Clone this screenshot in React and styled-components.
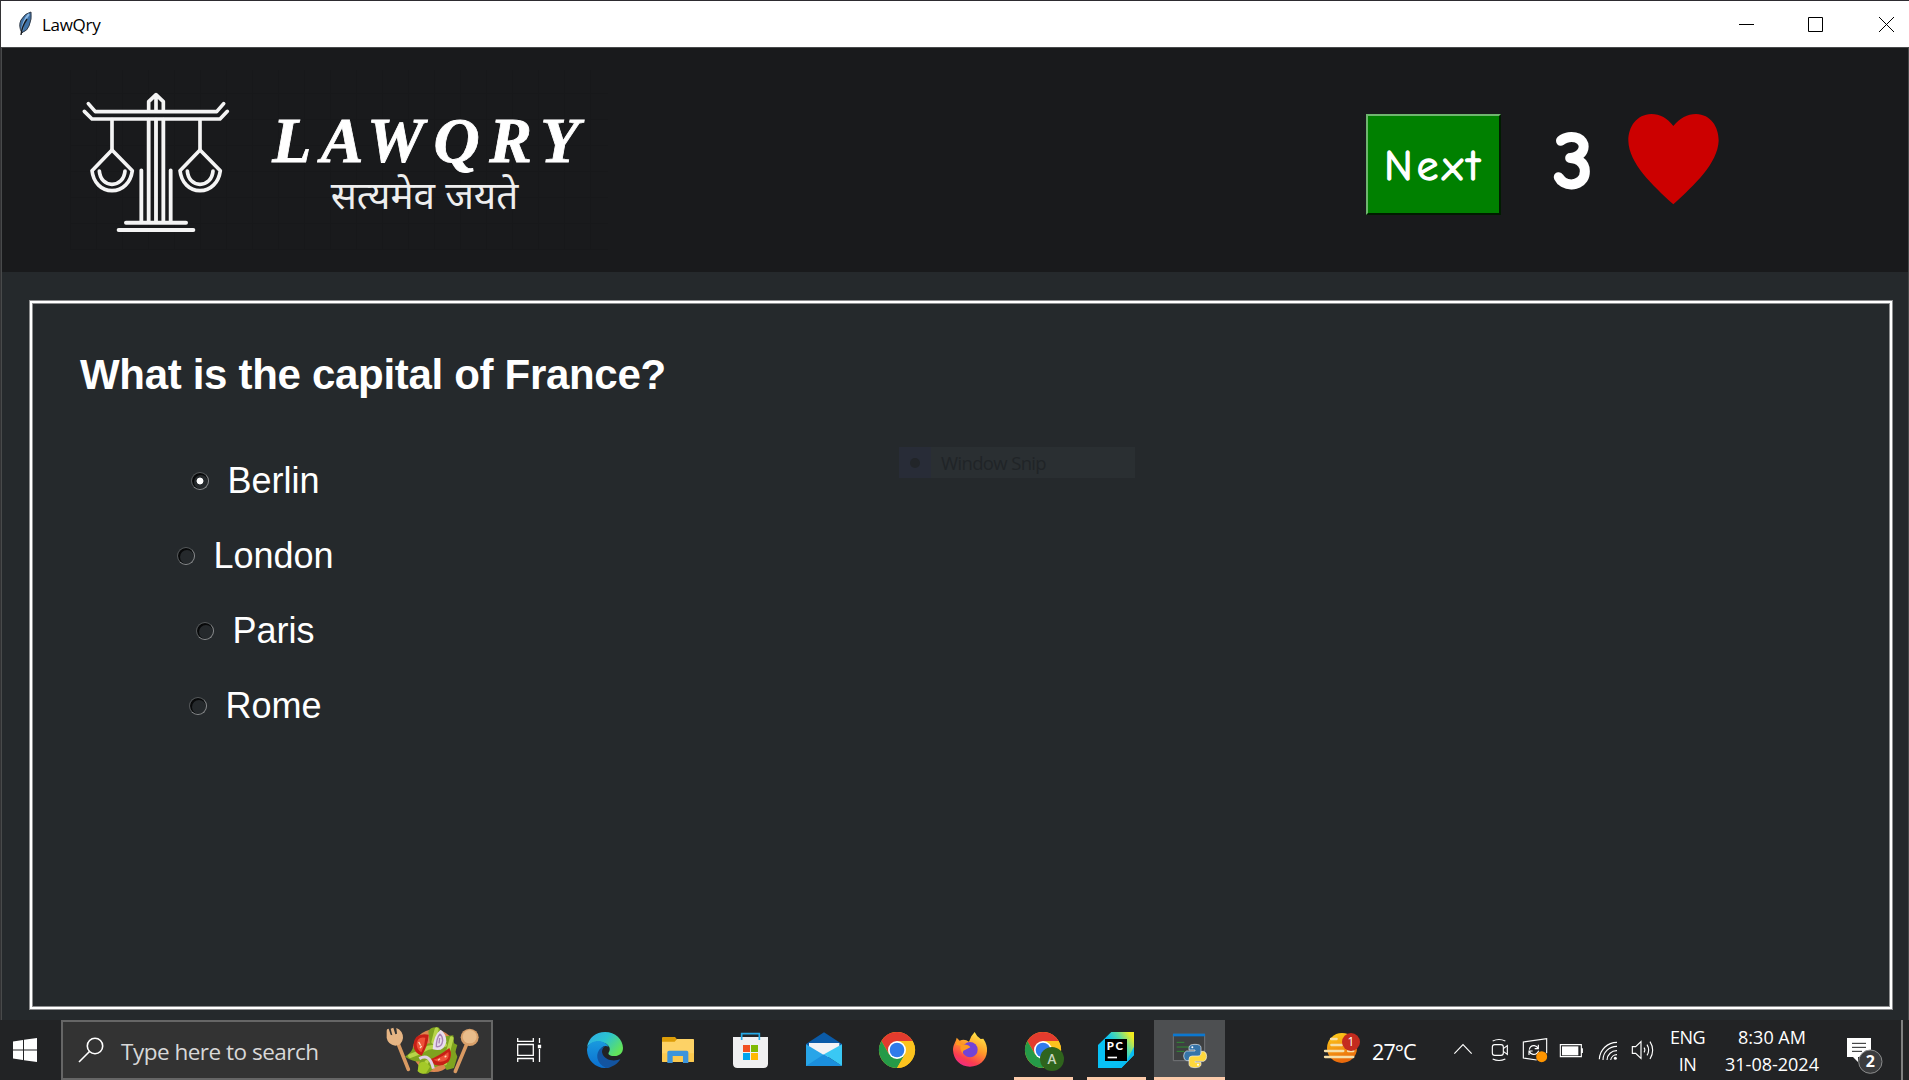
import React, { useState } from "react";
import styled, { createGlobalStyle, css } from "styled-components";

const GlobalStyle = createGlobalStyle`
  * { box-sizing: border-box; }
  html, body { margin: 0; padding: 0; background: #222325; overflow: hidden; }
  svg { display: block; flex: none; }
`;

const ui = `"Segoe UI", "Open Sans", "Noto Sans", sans-serif`;
const comic = `"Comic Sans MS", "Comic Neue", Lato, sans-serif`;

const Desktop = styled.div`
  width: 1909px;
  height: 1080px;
  display: flex;
  flex-direction: column;
  font-family: ${ui};
`;

const Window = styled.main`
  position: relative;
  height: 1020px;
  display: flex;
  flex-direction: column;
  background: #25292c;
  border-top: 1px solid #2d2b30;
  border-left: 1px solid #333335;
`;

const TitleBar = styled.header`
  height: 46px;
  flex: none;
  display: flex;
  align-items: center;
  background: #fff;
  padding-left: 16px;
`;

const WindowTitle = styled.span`
  margin-left: 9px;
  flex: 1;
  font-size: 17px;
  letter-spacing: -0.3px;
  line-height: 24px;
  padding-top: 2px;
  color: #000;
`;

const WindowButton = styled.button`
  width: 70px;
  height: 46px;
  padding: 0;
  border: 0;
  background: none;
  display: flex;
  align-items: center;
  justify-content: center;
`;

const WindowButtons = styled.div`
  display: flex;
  margin-right: -12px;
`;

const Client = styled.div`
  flex: 1;
  display: flex;
  flex-direction: column;
  border: solid #484a4b;
  border-width: 1px 1px 0 1px;
`;

const Banner = styled.section`
  height: 224px;
  flex: none;
  display: flex;
  align-items: flex-start;
  background: #191a1c;
`;

const Logo = styled.div`
  width: 538px;
  height: 180px;
  margin: 22px 0 0 68px;
  display: flex;
  background:
    repeating-linear-gradient(90deg, #17181a 0 1px, transparent 1px 26px),
    repeating-linear-gradient(0deg, #17181a 0 1px, transparent 1px 26px);
`;

const LogoWords = styled.div`
  width: 330px;
  margin: 39px 0 0 9px;
  display: flex;
  flex-direction: column;
  align-items: center;
  color: #fff;
`;

const LogoName = styled.div`
  font: italic bold 64px/64px "Liberation Serif", serif;
  letter-spacing: 9.5px;
  margin-right: -9px;
  white-space: nowrap;
  -webkit-text-stroke: 0.8px #fff;
`;

const LogoMotto = styled.div`
  margin: 5px 3px 0 0;
  font: 38.7px/44px "Noto Sans Devanagari", "Noto Sans", sans-serif;
  color: #eee;
  white-space: nowrap;
`;

const NextButton = styled.button`
  width: 135px;
  height: 101px;
  margin: 66px 0 0 758px;
  padding: 4px 0 0 1px;
  background: #008000;
  border: 2px solid;
  border-color: #6fb56f #001c00 #001c00 #6fb56f;
  color: #fff;
  font: 43px/1 ${comic};
  letter-spacing: 4.2px;
  -webkit-text-stroke: 1.3px #fff;
`;

const Lives = styled.div`
  display: flex;
  margin: 66px 0 0 48px;
`;

const LivesCount = styled.span`
  width: 48px;
  height: 94px;
  text-align: center;
  font: bold 82px/95px ${comic};
  -webkit-text-stroke: 2px #fff;
  color: #fff;
`;

const Heart = styled.svg`
  margin-left: 31px;
`;

const QuizPanel = styled.section`
  flex: 1;
  margin: 29px 16px 11px 28px;
  border: 2px solid #fff;
  box-shadow: 0 0 0 1px #8c8d8f, inset 0 0 0 1px #8c8d8f;
  padding: 45px 0 0 48px;
  color: #fff;
  font-family: "Liberation Sans", Arial, sans-serif;
`;

const Question = styled.h1`
  margin: 0;
  font-size: 42px;
  line-height: 54px;
  font-weight: bold;
  letter-spacing: -0.31px;
  white-space: nowrap;
`;

const Options = styled.div`
  width: 351px;
  margin-top: 41px;
  display: flex;
  flex-direction: column;
  align-items: center;
`;

const Option = styled.label`
  height: 75px;
  display: flex;
  align-items: center;
  font-size: 36px;
`;

const Radio = styled.input`
  appearance: none;
  width: 18px;
  height: 18px;
  margin: 0 18px 0 0;
  border-radius: 50%;
  border: 1.5px solid;
  border-color: #55585a #8a8c8e #8a8c8e #55585a;
  box-shadow: inset 1px 1px 0 1px #08090a;
  background: #25292c;
  &:checked {
    background: radial-gradient(circle, #fff 0 3px, #25292c 3.8px);
  }
`;

const SnipHint = styled.div`
  position: absolute;
  left: 898px;
  top: 446px;
  width: 236px;
  height: 31px;
  display: flex;
  align-items: center;
  background: #2a2f32;
  color: #202427;
  font-size: 18.5px;
  letter-spacing: -0.65px;
`;

const SnipMark = styled.span`
  width: 32px;
  height: 31px;
  margin-right: 10px;
  display: flex;
  align-items: center;
  justify-content: center;
  background: #282c37;
  &::after {
    content: "";
    width: 10px;
    height: 10px;
    border-radius: 50%;
    background: #222529;
  }
`;

const Taskbar = styled.footer`
  height: 60px;
  display: flex;
  align-items: center;
  background: #222325;
  color: #fff;
`;

const StartButton = styled.div`
  width: 61px;
  padding-left: 13px;
`;

const SearchBox = styled.div`
  width: 432px;
  height: 60px;
  display: flex;
  align-items: center;
  background: #333;
  border: 2px solid #666;
  padding-left: 15px;
`;

const SearchText = styled.span`
  width: 240px;
  margin-left: 17px;
  margin-right: 21px;
  padding-top: 3px;
  font-size: 22.5px;
  letter-spacing: -0.5px;
  color: #d8d8d8;
  white-space: nowrap;
`;

const TaskView = styled.div`
  width: 76px;
  padding-left: 24px;
`;

const AppCell = styled.div`
  width: 73px;
  height: 60px;
  padding: 12px 0 0 18px;
  ${(p) =>
    p.$running &&
    css`
      background: linear-gradient(#fccbab, #fccbab) 7px 57px / 59px 3px no-repeat;
    `}
  ${(p) =>
    p.$active &&
    css`
      background:
        linear-gradient(#fccbab, #fccbab) 1px 57px / 71px 3px no-repeat,
        linear-gradient(#4d4f51, #4d4f51) 1px 0 / 71px 60px no-repeat;
    `}
`;

const Weather = styled.div`
  display: flex;
  align-items: center;
  width: 132px;
  margin-left: 94px;
  font-size: 21.5px;
  letter-spacing: -0.9px;
`;

const Temperature = styled.span`
  margin-left: 8px;
  padding-top: 3px;
`;

const TrayIcon = styled.svg`
  margin-left: ${(p) => p.$gap}px;
  fill: none;
  stroke: #fff;
  stroke-width: 3.4;
`;

const TrayText = styled.div`
  width: ${(p) => p.$width}px;
  margin-left: ${(p) => p.$gap}px;
  display: flex;
  flex-direction: column;
  align-items: center;
  font-size: 18px;
  line-height: 27px;
  letter-spacing: ${(p) => p.$tracking}px;
  white-space: nowrap;
  padding-top: 1px;
`;

const ShowDesktop = styled.div`
  width: 2px;
  height: 60px;
  margin-left: 17px;
  background: #808080;
`;

/* Icons share one enlarged drawing grid: three units to a pixel. */
const AppIcon = ({ x, children }) => (
  <svg width="36" height="40" viewBox={`${x} 96 108 120`} overflow="visible">
    {children}
  </svg>
);

const Feather = () => (
  <svg width="16" height="26" viewBox="0 0 16 26">
    <path d="M5 22 Q1 15 4 9 Q8 2 14 1 Q15 8 12 15 Q10 20 6 21Z" fill="#3f73a8" stroke="#333b46" strokeWidth="1" />
    <path d="M12 3 Q6 10 5 20" stroke="#8db9e4" strokeWidth="2" fill="none" />
    <path d="M10 8 Q5 15 4 24" stroke="#16191d" strokeWidth="1.4" fill="none" />
  </svg>
);

const ScalesDrawing = styled.svg`
  margin-top: 10px;
`;

const Scales = () => (
  <ScalesDrawing width="182" height="160" viewBox="0 0 546 480">
    <g fill="none" stroke="#f4f4f4" strokeWidth="11" strokeLinecap="round" strokeLinejoin="round">
      <path d="M55 71 76 95H440L461 71M43 94 66 117H450L472 94" />
      <path d="M236 92V65L258 44 280 65V92M258 46V92" />
      <path d="M236 119V425M258 119V425M280 119V425M214 271V425M302 271V425" strokeWidth="11.5" />
      <path d="M168 428H348M146 450H370" strokeWidth="12" />
      <path d="M126 119V210M390 119V210" />
      <path d="M126 210 66 272C70 308 94 332 126 332S182 308 187 272ZM390 210 330 272C334 308 358 332 390 332S446 308 451 272Z" />
      <path d="M88 273C90 298 106 313 126 313S163 298 165 273M352 273C354 298 370 313 390 313S427 298 429 273" />
    </g>
  </ScalesDrawing>
);

const Chrome = ({ cx }) => (
  <g transform={`translate(${cx} 150)`}>
    <circle r="54" fill="#fbc116" />
    <path d="M-46.800 -27A54 54 0 0 1 46.800 -27L0 -27 -23 13.500Z" fill="#e33b2e" />
    <path d="M-46.800 -27A54 54 0 0 0 0 54L23.400 13.500 -23.400 13.500Z" fill="#259a48" />
    <path d="M0-27H46.800A54 54 0 0 1 0 54L23.400 13.500Z" fill="#fcc31e" />
    <circle r="27" fill="#fff" />
    <circle r="22" fill="#2f7bea" />
  </g>
);

const Salad = () => (
  <svg width="100" height="56" viewBox="36 6 300 168">
    <g strokeLinecap="round" fill="none">
      <path d="M84 70 115 148" stroke="#d99a62" strokeWidth="11" />
      <path d="M291 70 256 154" stroke="#d99a62" strokeWidth="11" />
    </g>
    <path d="M50 36Q49 26 56 26L62 44 67 46 62 26 70 23 76 43 81 41 79 24Q99 32 99 54 96 76 76 77 54 74 50 54Z" fill="#e6b584" />
    <ellipse cx="299" cy="52" rx="27" ry="26" fill="#d8a06a" />
    <ellipse cx="299" cy="50" rx="21" ry="20" fill="#e9bd8b" />
    <circle cx="192" cy="92" r="64" fill="#dc8650" />
    <path d="M105 110Q125 99 133 76L180 70 175 35Q181 19 205 22 216 32 213 50L250 46 252 70 262 75 256 95 262 110 252 144 230 150 221 132 195 142 175 160Q160 165 143 154L149 124Q130 126 105 110Z" fill="#7fa31f" />
    <path d="M120 108Q145 100 174 83L225 75M200 28 190 66M155 150 170 126M245 55 225 130" stroke="#b7d448" strokeWidth="12" fill="none" strokeLinecap="round" />
    <path d="M176 44Q133 36 130 75 132 99 155 107 174 77 176 44Z" fill="#c71f16" />
    <path d="M166 53Q140 48 140 75 142 91 154 97 165 76 166 53Z" fill="#ee5138" />
    <path d="M212 29Q190 45 188 88 222 98 229 65 229 41 212 29Z" fill="#e9dcec" />
    <path d="M210 42Q199 55 199 80 216 82 218 62 218 49 210 42M209 54 207 70" fill="none" stroke="#a783b4" strokeWidth="4" />
    <path d="M180 118Q204 110 238 84 249 106 235 126 216 141 194 134 183 128 180 118Z" fill="#c71f16" />
    <path d="M190 119Q214 113 235 96 239 111 229 120 211 131 190 119Z" fill="#ee5138" />
    <path d="M146 66 152 76M150 84 155 78M204 121 210 116M224 112 229 107" stroke="#ffd9b8" strokeWidth="4" />
    <path d="M148 116Q180 98 190 146" fill="none" stroke="#e0cfe6" strokeWidth="9" />
    <path d="M146 132Q163 116 180 140L168 160Q150 164 143 153Z" fill="#a4c928" />
  </svg>
);

const apps = [
  {
    name: "edge",
    icon: (
      <AppIcon x={81}>
        <defs>
          <linearGradient id="edgeTop" x1="0" x2="1" y1="0" y2=".6">
            <stop offset="0" stopColor="#2fa9e8" />
            <stop offset=".5" stopColor="#2bc3d2" />
            <stop offset="1" stopColor="#62e35a" />
          </linearGradient>
          <linearGradient id="edgeSide" x2="0" y2="1">
            <stop offset="0" stopColor="#1a9ade" />
            <stop offset="1" stopColor="#0b6fd0" />
          </linearGradient>
        </defs>
        <path d="M81 142C86 112 108 96 135 96 166 96 189 119 189 144 189 160 177 169 161 168 149 168 142 162 147 156 153 147 147 135 136 130 116 120 92 126 81 142Z" fill="url(#edgeTop)" />
        <path d="M81 150C82 132 99 121 117 123 131 124 142 132 146 140 130 133 119 145 120 160 121 182 137 195 152 201 117 213 82 187 81 150Z" fill="url(#edgeSide)" />
        <path d="M124 143C104 158 108 190 138 204 158 202 174 191 181 178 160 186 132 180 127 160 124 150 130 141 136 137Z" fill="#1354a0" />
      </AppIcon>
    ),
  },
  {
    name: "explorer",
    icon: (
      <AppIcon x={300}>
        <path d="M306 113Q306 111 309 111H345L351 118V130H306Z" fill="#dd9d08" />
        <path d="M306 125H344L351 117H400Q402 117 402 120V183Q402 186 399 186H309Q306 186 306 183Z" fill="#fdd266" />
        <path d="M306 160H402V183Q402 186 399 186H309Q306 186 306 183Z" fill="#fcc94e" />
        <path d="M322 189V157Q322 152 327 152H380Q385 152 385 157V189H369V168H338V189Z" fill="#3c94db" />
      </AppIcon>
    ),
  },
  {
    name: "store",
    icon: (
      <AppIcon x={519}>
        <path d="M519 111H624V192Q623 204 611 204H532Q520 204 519 192Z" fill="#f0f0f1" />
        <path d="M545 120V101H598V120" fill="none" stroke="#24a9e7" strokeWidth="5" />
        <path d="M549 135H570V156H549Z" fill="#f15022" />
        <path d="M573 135H594V156H573Z" fill="#80ba01" />
        <path d="M549 159H570V180H549Z" fill="#02a4ef" />
        <path d="M573 159H594V180H573Z" fill="#ffb902" />
      </AppIcon>
    ),
  },
  {
    name: "mail",
    icon: (
      <AppIcon x={738}>
        <path d="M738 132 792 97 846 132V160H738Z" fill="#0b5ba8" />
        <path d="M747 129H838V150L792 180 747 150Z" fill="#f3f3f5" />
        <path d="M738 133 846 198H738Z" fill="#28a5e8" />
        <path d="M846 133V198L792 163Z" fill="#3ac8f4" />
        <path d="M738 198 792 163 846 198Z" fill="#1b8fdd" />
      </AppIcon>
    ),
  },
  { name: "chrome", icon: <AppIcon x={957}><Chrome cx={1011} /></AppIcon> },
  {
    name: "firefox",
    icon: (
      <AppIcon x={1176}>
        <defs>
          <linearGradient id="fox" x1=".8" y1="0" x2=".3" y2="1">
            <stop offset="0" stopColor="#fff04c" />
            <stop offset=".45" stopColor="#ff9a28" />
            <stop offset=".8" stopColor="#fb3c50" />
            <stop offset="1" stopColor="#ef2a86" />
          </linearGradient>
        </defs>
        <path d="M1190 113 1199 122Q1214 116 1227 125L1234 109 1244 96Q1250 110 1262 117L1270 116Q1283 135 1281 154C1279 183 1257 200 1230 200 1202 200 1180 180 1179 150 1179 134 1187 127 1190 113Z" fill="url(#fox)" />
        <circle cx="1230" cy="149" r="23" fill="#7343d6" />
        <path d="M1190 119 1206 134Q1224 131 1231 142L1215 150Q1206 153 1209 161 1198 148 1202 137L1188 134Z" fill="#ff9a20" />
      </AppIcon>
    ),
  },
  {
    name: "chrome profile",
    running: true,
    icon: (
      <AppIcon x={75}>
        <Chrome cx={129} />
        <circle cx="156" cy="177" r="36" fill="#2f641d" />
        <text x="156" y="191" textAnchor="middle" fontFamily="Lato, sans-serif" fontWeight="bold" fontSize="38" fill="#c8d6c0">A</text>
      </AppIcon>
    ),
  },
  {
    name: "pycharm",
    running: true,
    icon: (
      <AppIcon x={294}>
        <defs>
          <linearGradient id="pc" x1=".1" y1=".6" x2="1" y2="0">
            <stop offset=".35" stopColor="#08c1f5" />
            <stop offset=".62" stopColor="#59dba3" />
            <stop offset=".9" stopColor="#f1ec20" />
          </linearGradient>
        </defs>
        <path d="M334 96H402V165L364 204H294V135Z" fill="url(#pc)" />
        <path d="M402 140V165L364 204H330L380 183Z" fill="#08bdf4" />
        <path d="M315 117H381V183H315Z" fill="#000" />
        <text x="320" y="150" fontFamily="Lato, sans-serif" fontWeight="900" fontSize="34" textLength="49" fill="#fff">PC</text>
        <path d="M323 170H351V175H323Z" fill="#fff" />
      </AppIcon>
    ),
  },
  {
    name: "python",
    running: true,
    active: true,
    icon: (
      <AppIcon x={513}>
        <path d="M520 103H614V182H520Z" fill="#3e4041" stroke="#747678" strokeWidth="3" />
        <path d="M519 101H615V109H519Z" fill="#0b78d0" />
        <path d="M530 127H553M530 141H568M530 154H553" stroke="#2f8b33" strokeWidth="3" />
        <path d="M567 143Q567 133 585 133T603 143V165Q603 171 596 171H578Q568 171 568 182H560Q551 180 551 168T560 153H585V150H567Z" fill="#3674a8" stroke="#eee" strokeWidth="2" />
        <path d="M603 193Q603 203 585 203T567 193V178Q567 168 576 168H594Q604 168 604 154H611Q620 157 620 169T611 184H585V187H603Z" fill="#ffd83c" stroke="#eee" strokeWidth="2" />
        <circle cx="577" cy="142" r="3" fill="#fff" />
        <circle cx="594" cy="194" r="3" fill="#fff" />
      </AppIcon>
    ),
  },
];

const answers = ["Berlin", "London", "Paris", "Rome"];

export default function App() {
  const [picked, setPicked] = useState("Berlin");
  return (
    <Desktop>
      <GlobalStyle />
      <Window>
        <TitleBar>
          <Feather />
          <WindowTitle>LawQry</WindowTitle>
          <WindowButtons>
            <WindowButton aria-label="Minimize">
              <svg width="15" height="15" viewBox="0 0 15 15"><path d="M0 7.500H15" stroke="#000" /></svg>
            </WindowButton>
            <WindowButton aria-label="Maximize">
              <svg width="17" height="15" viewBox="0 0 17 15"><path d="M.5.5H14.500V14.500H.5Z" stroke="#000" fill="none" /></svg>
            </WindowButton>
            <WindowButton aria-label="Close">
              <svg width="15" height="15" viewBox="0 0 15 15"><path d="M0 0 15 15M15 0 0 15" stroke="#000" /></svg>
            </WindowButton>
          </WindowButtons>
        </TitleBar>
        <Client>
          <Banner>
            <Logo>
              <Scales />
              <LogoWords>
                <LogoName>LAWQRY</LogoName>
                <LogoMotto>सत्यमेव जयते</LogoMotto>
              </LogoWords>
            </Logo>
            <NextButton>Next</NextButton>
            <Lives>
              <LivesCount>3</LivesCount>
              <Heart width="92" height="92" viewBox="864 72 276 276">
                <path d="M1000 108C1020 84 1042 72 1068 72C1112 73 1136 110 1136 152C1133 220 1064 284 1000 343C936 284 867 220 865 152C865 110 890 73 934 72C960 72 982 84 1000 108Z" fill="#c00" />
              </Heart>
            </Lives>
          </Banner>
          <QuizPanel>
            <Question>What is the capital of France?</Question>
            <Options>
              {answers.map((a) => (
                <Option key={a}>
                  <Radio type="radio" name="answer" checked={picked === a} onChange={() => setPicked(a)} />
                  {a}
                </Option>
              ))}
            </Options>
          </QuizPanel>
        </Client>
        <SnipHint>
          <SnipMark />
          Window Snip
        </SnipHint>
      </Window>
      <Taskbar>
        <StartButton>
          <svg width="24" height="24" viewBox="0 0 24 24" fill="#fff">
            <path d="M0 3.500 10 2V11.500H0ZM11 1.800 24 0V11.500H11ZM0 12.500H10V22L0 20.500ZM11 12.500H24V24L11 22.200Z" />
          </svg>
        </StartButton>
        <SearchBox>
          <svg width="26" height="26" viewBox="0 0 26 26" fill="none" stroke="#fff" strokeWidth="1.600">
            <circle cx="17" cy="9" r="7.700" />
            <path d="M11.500 14.500 1 25" />
          </svg>
          <SearchText>Type here to search</SearchText>
          <Salad />
        </SearchBox>
        <TaskView>
          <svg width="26" height="24" viewBox="0 0 26 24" fill="none" stroke="#fff" strokeWidth="1.300">
            <path d="M.7 0V3.300H16.300V0M.7 6.500H16.300V17.300H.7ZM.7 24V20.500H16.300V24M22.500 0V5M22.500 11V24" />
            <path d="M21.500 7.500H23.500V9.500H21.500Z" fill="#fff" />
          </svg>
        </TaskView>
        {apps.map((a) => (
          <AppCell key={a.name} $running={a.running} $active={a.active}>{a.icon}</AppCell>
        ))}
        <Weather>
          <svg width="44" height="36" viewBox="960 93 132 108">
            <defs>
              <linearGradient id="sun" x2=".3" y2="1">
                <stop offset="0" stopColor="#ffd21a" />
                <stop offset="1" stopColor="#ea6a0c" />
              </linearGradient>
            </defs>
            <circle cx="1026" cy="141" r="45" fill="url(#sun)" />
            <path d="M993 114H1010M994 132H1026M975 150H1030M1044 150H1060M975 168H1060" stroke="#f6dfa8" strokeWidth="7" strokeLinecap="round" />
            <circle cx="1053" cy="123" r="27" fill="#c42b1f" />
            <text x="1052" y="136" textAnchor="middle" fontFamily="Open Sans, sans-serif" fontSize="36" fill="#fff">1</text>
          </svg>
          <Temperature>27°C</Temperature>
        </Weather>
        <TrayIcon $gap={0} width="22" height="32" viewBox="36 102 66 96"><path d="M43 161 69 134 95 161" /></TrayIcon>
        <TrayIcon $gap={16} width="20" height="32" viewBox="150 102 60 96">
          <path d="M158 123Q177 114 196 123M158 177Q177 186 196 177" />
          <rect x="157" y="134" width="33" height="32" rx="7" />
          <path d="M190 146 202 137V163L190 154" />
        </TrayIcon>
        <TrayIcon $gap={12} width="26" height="32" viewBox="246 102 78 96">
          <path d="M290 180 250 174V126L320 116V160M268 149Q270 136 283 137 291 138 294 145M295 134V146H284M296 152Q290 165 279 163 270 161 268 153M267 165V153H278" />
          <circle cx="305" cy="170" r="16.500" fill="#ff9500" stroke="none" />
        </TrayIcon>
        <TrayIcon $gap={11} width="25" height="32" viewBox="357 102 75 96">
          <path d="M361 134H424V170H361ZM427 145V159" />
          <path d="M366 139H415V166H366Z" fill="#fff" stroke="none" />
        </TrayIcon>
        <TrayIcon $gap={14} width="20" height="32" viewBox="474 102 60 96">
          <path d="M478 178A53 53 0 0 1 531 127M489 180A41 41 0 0 1 531 139M501 180A29 29 0 0 1 531 152M512 180A19 19 0 0 1 531 164" />
          <circle cx="526" cy="175" r="4.500" fill="#fff" stroke="none" />
        </TrayIcon>
        <TrayIcon $gap={13} width="24" height="32" viewBox="573 102 72 96">
          <path d="M577 140H587L603 125V175L587 160H577ZM612 143Q617 150 612 157M621 134Q631 150 621 166M630 125Q646 150 630 177" />
        </TrayIcon>
        <TrayText $gap={8} $width={49} $tracking={-0.5}>
          <span>ENG</span>
          <span>IN</span>
        </TrayText>
        <TrayText $gap={10} $width={100} $tracking={0}>
          <span>8:30 AM</span>
          <span>31-08-2024</span>
        </TrayText>
        <TrayIcon $gap={22} width="40" height="48" viewBox="1212 78 120 144">
          <path d="M1221 114H1293V171H1254V186L1239 171H1221Z" fill="#fff" stroke="none" />
          <path d="M1236 130H1278M1236 142H1278M1236 154H1266" stroke="#222325" strokeWidth="3" />
          <circle cx="1291" cy="185" r="35" fill="#3b3c3e" stroke="#8b8c8d" strokeWidth="3" />
          <text x="1291" y="202" textAnchor="middle" fontFamily="Open Sans, sans-serif" fontWeight="700" fontSize="48" fill="#fff" stroke="none">2</text>
        </TrayIcon>
        <ShowDesktop />
      </Taskbar>
    </Desktop>
  );
}
